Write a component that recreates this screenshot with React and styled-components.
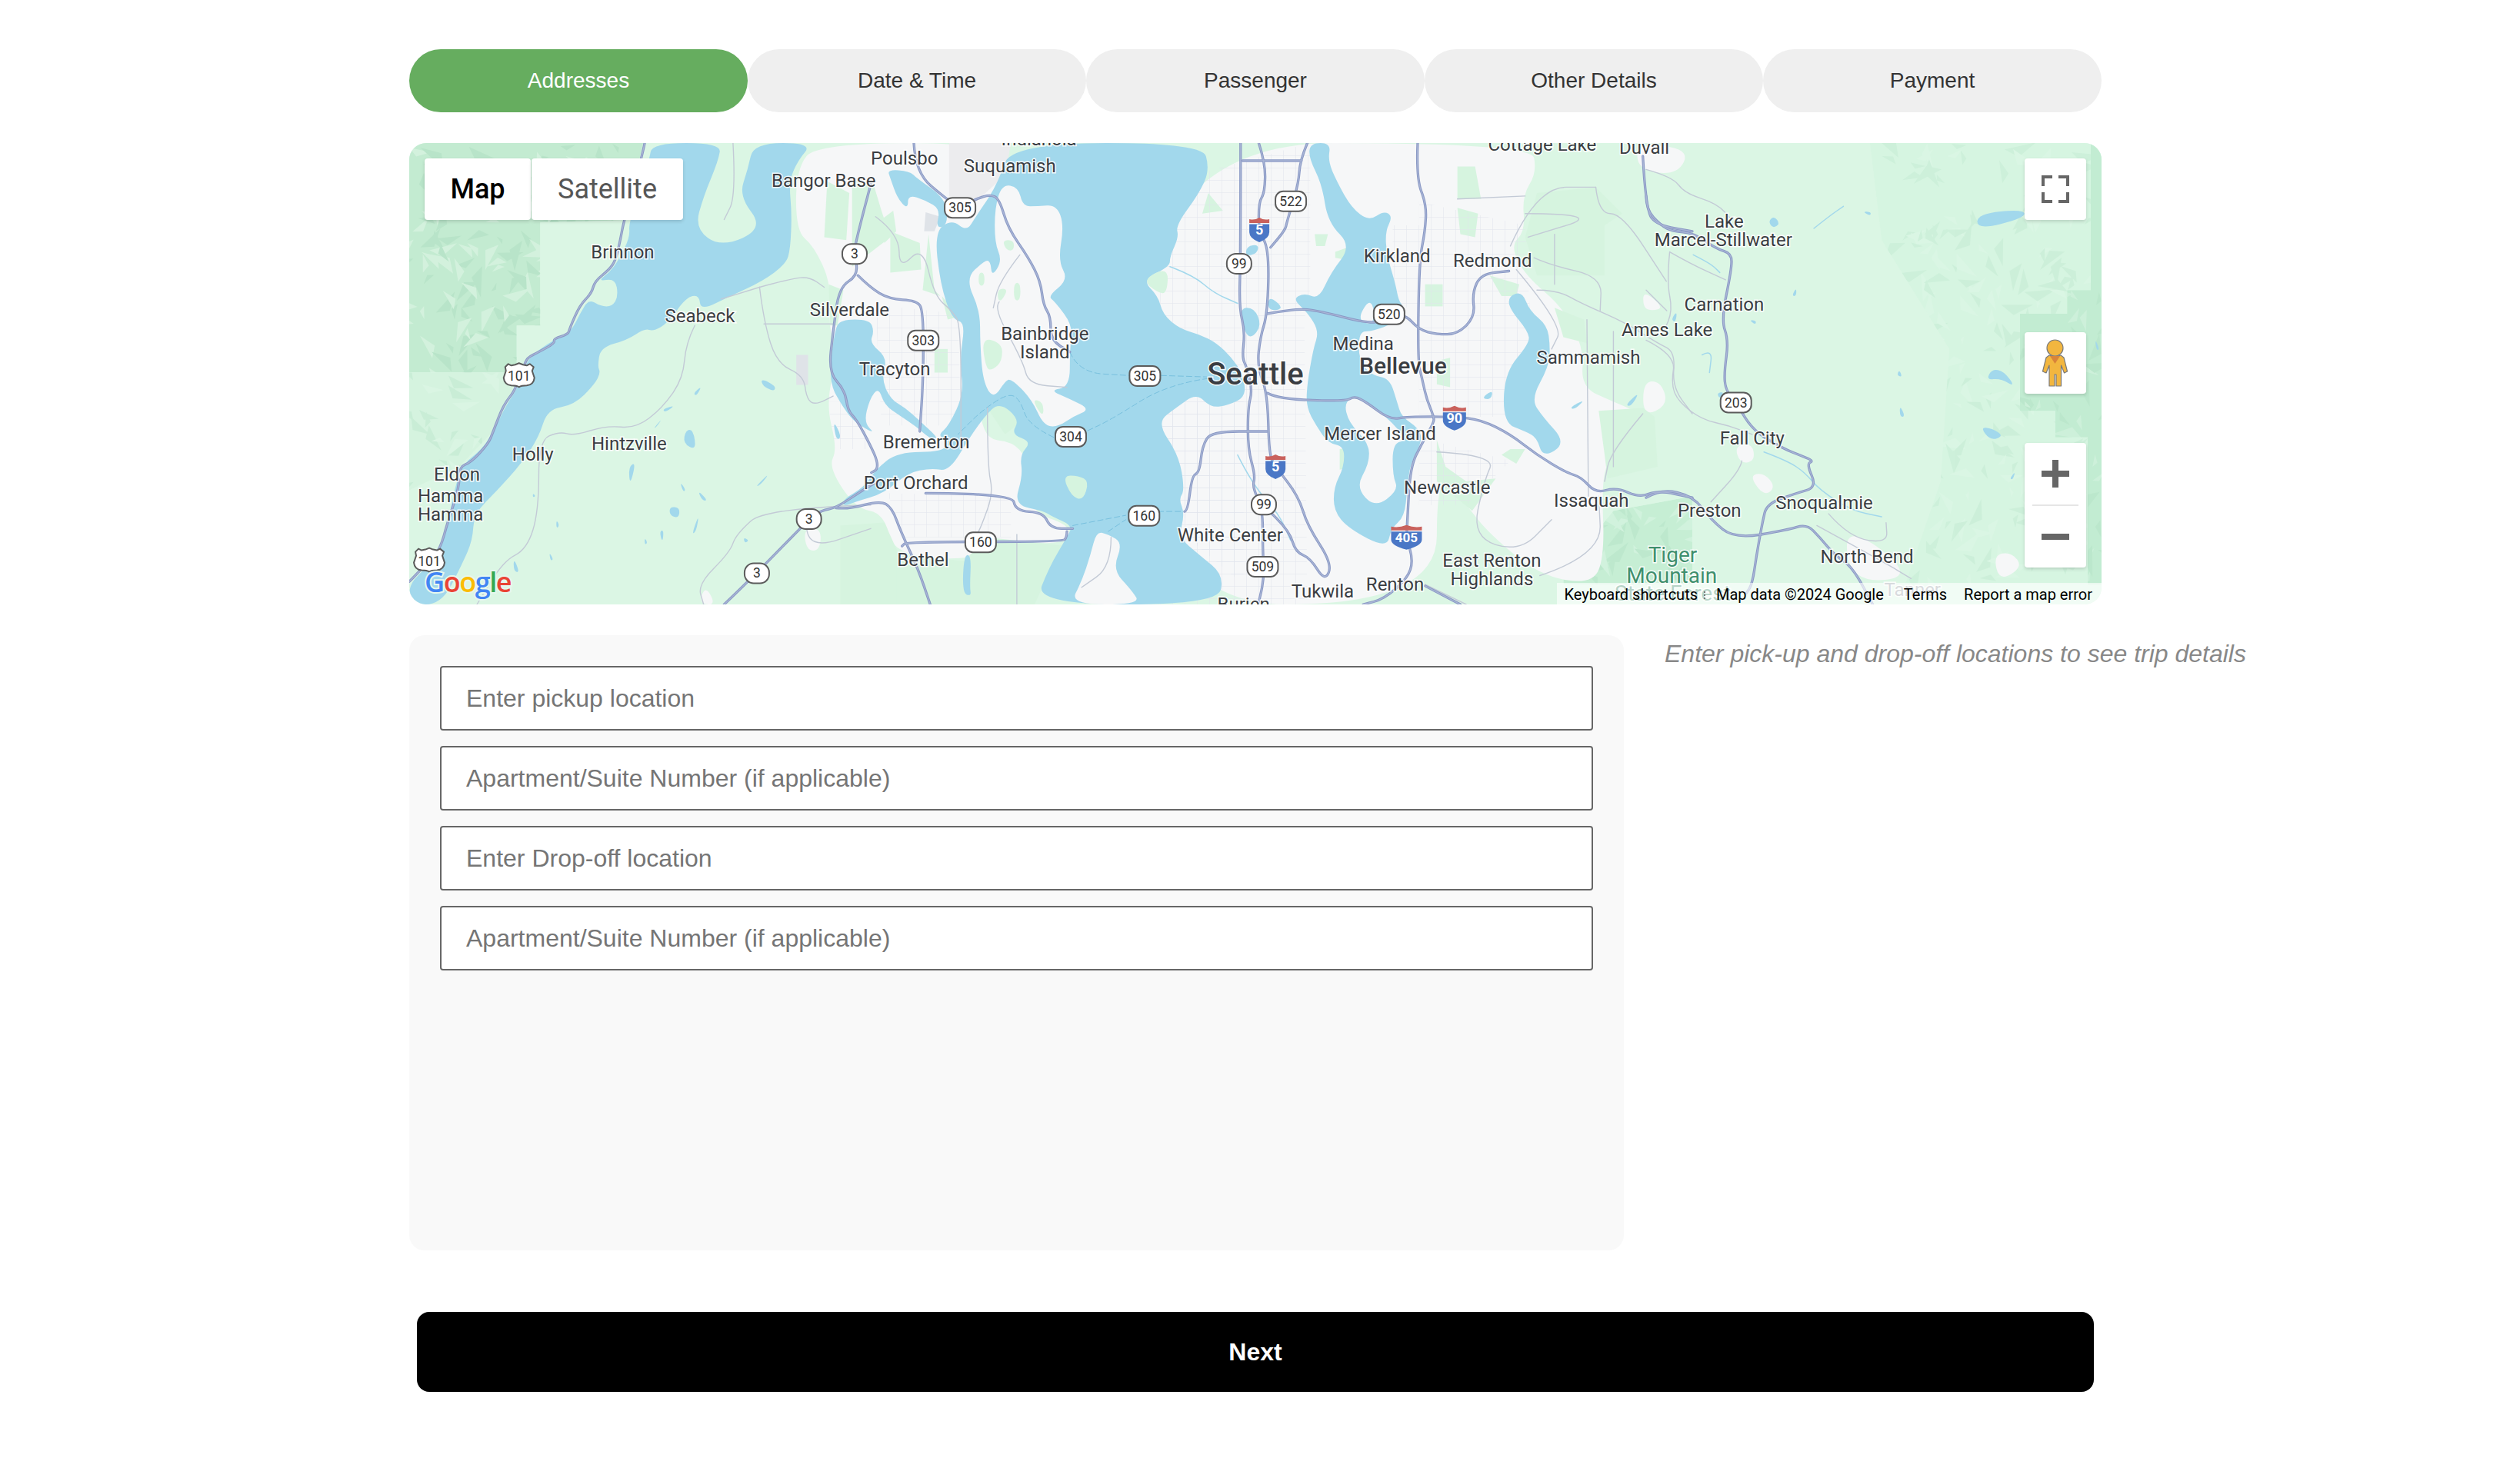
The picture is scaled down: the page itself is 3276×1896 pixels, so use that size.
import React from 'react';
import styled, { createGlobalStyle } from 'styled-components';

const GlobalStyle = createGlobalStyle`
    html, body {
        margin: 0;
        padding: 0;
        background: #fff;
        font-family: "Liberation Sans", Arial, sans-serif;
    }
`;

const Page = styled.div`
    width: 3264px;
    display: flex;
    justify-content: center;
    padding-top: 64px;
    padding-bottom: 86px;
`;

const Content = styled.div`
    width: 2200px;
    display: flex;
    flex-direction: column;
    align-items: center;
`;

const Steps = styled.div`
    width: 100%;
    display: grid;
    grid-template-columns: repeat(5, 1fr);
    margin-bottom: 40px;
`;

const Step = styled.div`
    height: 82px;
    border-radius: 41px;
    display: flex;
    align-items: center;
    justify-content: center;
    font-size: 28px;
    background: ${(p) => (p.$active ? '#66ad5f' : '#efefef')};
    color: ${(p) => (p.$active ? '#fff' : '#333')};
`;

const MapFrame = styled.div`
    position: relative;
    width: 100%;
    height: 600px;
    border-radius: 22px;
    overflow: hidden;
    background: #dbf6e4;
    margin-bottom: 40px;
`;

const MapCanvas = styled.svg`
    display: block;
    width: 2200px;
    height: 600px;
`;

const Fill = styled.path`
    fill: ${(p) => p.$color};
    stroke: none;
`;

const Line = styled.path`
    fill: none;
    stroke: ${(p) => p.$color};
    stroke-width: ${(p) => p.$w}px;
    stroke-linejoin: round;
    stroke-linecap: round;
    stroke-dasharray: ${(p) => p.$dash || 'none'};
`;

const Label = styled.text`
    font-family: Roboto, "Liberation Sans", sans-serif;
    font-size: ${(p) => p.$size || 24}px;
    font-weight: ${(p) => p.$weight || 400};
    fill: ${(p) => p.$color || '#3a3d42'};
    stroke: #fff;
    stroke-width: 3px;
    stroke-opacity: 0.85;
    paint-order: stroke;
    text-anchor: middle;
`;

const ShieldText = styled.text`
    font-family: Roboto, "Liberation Sans", sans-serif;
    font-size: ${(p) => p.$size || 17.5}px;
    font-weight: ${(p) => p.$weight || 400};
    fill: ${(p) => p.$color || '#333'};
    text-anchor: middle;
`;

const LogoText = styled.text`
    font-family: "Open Sans", Roboto, sans-serif;
    font-size: 36px;
    font-weight: 600;
    stroke: #e6f7ee;
    stroke-width: 4px;
    paint-order: stroke;
    letter-spacing: -1.5px;
`;

const MapTypes = styled.div`
    position: absolute;
    top: 20px;
    left: 20px;
    display: flex;
    gap: 1px;
`;

const MapType = styled.button`
    height: 80px;
    width: ${(p) => p.$w}px;
    border: none;
    border-radius: 4px;
    background: #fff;
    box-shadow: 0 2px 4px rgba(0, 0, 0, 0.15);
    font-family: Roboto, "Liberation Sans", sans-serif;
    font-size: 36px;
    font-weight: ${(p) => (p.$active ? 500 : 400)};
    color: ${(p) => (p.$active ? '#000' : '#565656')};
    padding: 0;
`;

const MapButton = styled.div`
    position: absolute;
    right: 20px;
    top: ${(p) => p.$top}px;
    width: 80px;
    height: 80px;
    background: #fff;
    border-radius: 4px;
    box-shadow: 0 2px 4px rgba(0, 0, 0, 0.15);
    display: flex;
    align-items: center;
    justify-content: center;
`;

const ZoomBox = styled.div`
    position: absolute;
    right: 20px;
    top: 390px;
    width: 80px;
    background: #fff;
    border-radius: 4px;
    box-shadow: 0 2px 4px rgba(0, 0, 0, 0.15);
    display: flex;
    flex-direction: column;
    align-items: center;
`;

const ZoomStep = styled.div`
    height: 80px;
    display: flex;
    align-items: center;
    justify-content: center;
`;

const ZoomRule = styled.div`
    width: 60px;
    height: 2px;
    background: #e6e6e6;
`;

const Attribution = styled.div`
    position: absolute;
    right: 0;
    bottom: 0;
    height: 28px;
    box-sizing: border-box;
    padding: 2px 12px 0 10px;
    display: flex;
    align-items: center;
    gap: 26px;
    background: rgba(255, 255, 255, 0.62);
    font-family: Roboto, "Liberation Sans", sans-serif;
    font-size: 20px;
    color: #000;
    white-space: nowrap;
`;

const AttributionItem = styled.span`
    position: relative;
    margin-left: ${(p) => p.$pull || 0}px;

    &[data-dots]::after {
        content: '';
        position: absolute;
        right: -12px;
        top: 8px;
        width: 2px;
        height: 10px;
        border-left: 2px dotted #777;
    }
`;

const Row = styled.div`
    width: 100%;
    display: flex;
    gap: 53px;
    margin-bottom: 80px;
`;

const Panel = styled.div`
    width: 1579px;
    height: 800px;
    flex: none;
    box-sizing: border-box;
    padding: 40px;
    border-radius: 20px;
    background: #f9f9f9;
    display: flex;
    flex-direction: column;
    gap: 20px;
`;

const Field = styled.input`
    height: 84px;
    box-sizing: border-box;
    width: 100%;
    background: #fff;
    border: 2px solid #666;
    border-radius: 4px;
    padding: 0 32px;
    font-family: "Liberation Sans", Arial, sans-serif;
    font-size: 32px;
    outline: none;

    &::placeholder {
        color: #757575;
        opacity: 1;
    }
`;

const Hint = styled.p`
    margin: 6px 0 0;
    font-size: 32px;
    font-style: italic;
    line-height: 37px;
    color: #888;
    white-space: nowrap;
`;

const NextButton = styled.button`
    width: 2180px;
    height: 104px;
    border: none;
    border-radius: 16px;
    background: #000;
    color: #fff;
    font-family: "Liberation Sans", Arial, sans-serif;
    font-size: 32px;
    font-weight: 700;
`;

// zoomed crops were read at 1568px for 600px, every crop has its own x offset
const K = 600 / 1568;
const OFFSET = { A: 0, B: 568, C: 1068, D: 1608 };
const mx = (c, x) => OFFSET[c] + x * K;
const my = (y) => y * K;

const parse = (c, s) =>
    s.trim().split(/\s+/).map((p) => {
        const [x, y] = p.split(',').map(Number);
        return [+mx(c, x).toFixed(1), +my(y).toFixed(1)];
    });

const mid = (a, b) => [((a[0] + b[0]) / 2).toFixed(1), ((a[1] + b[1]) / 2).toFixed(1)];

const closed = (c, s) => {
    const pts = parse(c, s);
    const n = pts.length;
    let d = `M${mid(pts[n - 1], pts[0]).join(',')}`;
    pts.forEach((p, i) => {
        d += ` Q${p[0]},${p[1]} ${mid(p, pts[(i + 1) % n]).join(',')}`;
    });
    return d + ' Z';
};

const open = (c, s) => {
    const pts = parse(c, s);
    let d = `M${pts[0].join(',')}`;
    for (let i = 1; i < pts.length - 1; i++) {
        d += ` Q${pts[i][0]},${pts[i][1]} ${mid(pts[i], pts[i + 1]).join(',')}`;
    }
    return d + ` L${pts[pts.length - 1].join(',')}`;
};

const rawPoly = (c, s) => 'M' + parse(c, s).map((p) => p.join(',')).join(' L') + ' Z';

// low poly relief, seeded so the picture stays the same
const relief = (x0, y0, x1, y1, count, seed) => {
    let s = seed;
    const rnd = () => {
        s = (s * 16807) % 2147483647;
        return s / 2147483647;
    };
    const out = [];
    for (let i = 0; i < count; i++) {
        const x = x0 + rnd() * (x1 - x0);
        const y = y0 + rnd() * (y1 - y0);
        const a = rnd() * 6.28;
        const r = 12 + rnd() * 30;
        const d = `M${x.toFixed(1)},${y.toFixed(1)} L${(x + Math.cos(a) * r).toFixed(1)},${(y + Math.sin(a) * r).toFixed(1)} L${(x + Math.cos(a + 0.7) * r * 0.5).toFixed(1)},${(y + Math.sin(a + 0.7) * r * 0.5).toFixed(1)} Z`;
        out.push({ d, color: rnd() > 0.45 ? '#a9d9bd' : '#eafbf0' });
    }
    return out;
};

const TERRAIN = [
    { id: 'tw1', o: 0.4, d: rawPoly('A', '0,0 795,0 735,262 445,270 445,620 365,620 365,780 0,780'), color: '#c3ebd1', tri: relief(0, 0, 310, 300, 200, 11) },
    { id: 'tw2', o: 0.25, d: rawPoly('A', '0,780 325,780 355,840 285,980 170,1100 0,1180'), color: '#d5f3df', tri: relief(0, 295, 140, 460, 40, 23) },
    { id: 'te1', o: 0.2, d: rawPoly('D', '760,0 1547,0 1547,1500 880,1500 1000,1150 1030,700 800,330'), color: '#d6f5e1', tri: relief(1930, 0, 2200, 580, 240, 37) },
    { id: 'te2', o: 0.28, d: rawPoly('D', '1510,0 1547,0 1547,1500 1500,1500 1500,1000 1390,1000 1390,910 1270,910 1270,580 1430,580 1430,500 1510,500'), color: '#c2ecd2', tri: relief(2090, 190, 2200, 590, 70, 51) },
    { id: 'te3', o: 0.3, d: rawPoly('C', '960,1100 1090,1130 1085,1290 1000,1340 880,1300 800,1230'), color: '#c5edd3', tri: relief(1380, 420, 1490, 520, 30, 73) },
    { id: 'te4', o: 0.3, d: rawPoly('C', '1130,1295 1210,1295 1210,1360 1300,1250 1568,1200 1568,1500 1130,1500'), color: '#c6eed4', tri: relief(1500, 470, 1680, 580, 50, 89) },
];

const URBAN = [
    ['B', '-170,90 -100,0 560,0 560,200 410,1000 620,1020 610,1250 770,1300 740,1370 480,1340 440,1420 160,1400 130,1260 30,1240 -60,1100 -30,1040 -70,880 -20,700 -60,640 -50,480 -110,350 -170,300'],
    ['C', '-320,0 1020,0 1040,100 990,180 1000,300 950,350 1000,450 1130,560 1200,700 1190,830 1300,880 1400,920 1350,1000 1290,1060 1260,1150 1270,1400 1230,1500 1050,1470 880,1330 800,1230 700,1100 700,1568 -320,1568'],
    ['D', '-30,0 150,20 105,110 -30,90'],
    ['D', '-10,500 60,560 20,570 -10,560'],
    ['D', '-10,810 50,810 75,890 -10,930'],
    ['D', '350,1130 400,1120 440,1170 400,1200'],
    ['D', '300,1030 360,1020 370,1080 320,1090'],
    ['D', '670,1320 780,1360 900,1480 700,1490'],
    ['D', '1180,1400 1240,1390 1280,1440 1200,1490'],
    ['A', '990,1540 1010,1510 1040,1568 995,1568'],
    ['A', '1340,1310 1400,1310 1395,1385 1350,1385'],
];

const RESERVED = [
    ['B', '350,0 560,0 540,110 440,200 350,180', '#ececee'],
    ['B', '270,235 320,250 300,300 265,300', '#dfe3e8'],
    ['A', '1315,720 1355,720 1355,822 1315,822', '#dfe3e8'],
];

const PARKS = [
    ['A', '1420,130 1495,170 1485,330 1410,320'],
    ['A', '1425,480 1475,500 1455,620 1430,620'],
    ['B', '20,130 90,130 120,230 150,320 20,420'],
    ['B', '150,300 250,340 255,430 150,440'],
    ['B', '280,310 300,500 320,520 260,500'],
    ['B', '300,700 345,700 345,780 300,780'],
    ['B', '325,520 385,590 345,600'],
    ['B', '120,260 160,230 170,300 130,340'],
    ['B', '460,660 530,680 530,740 500,770 475,770'],
    ['B', '630,870 670,880 670,935'],
    ['B', '480,900 570,880 590,950 540,990'],
    ['B', '450,440 470,440 470,485 450,485'],
    ['B', '570,475 592,475 592,535 570,535'],
    ['B', '515,495 550,495 530,535 515,535'],
    ['B', '530,330 570,330 570,365 545,365'],
    ['B', '570,205 595,205 595,235 575,235'],
    ['B', '-20,1300 130,1290 180,1400 250,1480 280,1568 -20,1568'],
    ['B', '170,1568 170,1400 400,1420 480,1340 750,1370 690,1460 640,1568'],
    ['B', '1230,170 1280,230 1210,240'],
    ['C', '770,80 830,80 850,190 770,190'],
    ['C', '770,220 840,240 830,320 780,310'],
    ['C', '660,480 720,480 720,555 660,555'],
    ['C', '285,310 330,310 320,350 290,350'],
    ['C', '355,370 410,350 380,395 355,390'],
    ['C', '700,740 745,730 745,830 700,820'],
    ['C', '370,1040 405,1035 410,1100 370,1110'],
    ['C', '880,450 980,480 970,520 920,520'],
    ['C', '1040,170 1240,150 1330,240 1270,280 1270,450 1040,450 1000,320'],
    ['C', '1100,560 1200,600 1210,680 1130,660'],
    ['C', '700,1010 730,1100 800,1150 900,1140 820,1250 700,1150'],
    ['C', '950,1040 1000,1040 970,1090 920,1060'],
    ['C', '1250,910 1400,900 1440,930 1450,1100 1280,1140 1270,1060'],
];

const GRID = [
    ['C', '-240,140 270,0 270,500 250,600 260,1568 -240,1568 -240,900 -60,840 -240,640'],
    ['C', '640,200 1000,280 1020,640 930,930 640,930'],
    ['C', '640,1000 950,1080 800,1230 640,1230'],
    ['C', '550,280 640,280 640,560 550,560'],
    ['B', '100,550 380,580 390,960 120,960'],
    ['B', '140,1190 560,1200 560,1340 200,1340'],
    ['B', '-60,880 40,880 90,1040 -40,1040'],
    ['B', '1060,900 1350,860 1350,1500 1170,1350'],
];

const WATER = [
    ['A', '825,0 815,60 745,270 750,320 710,400 680,440 640,470 700,460 710,520 690,555 650,555 610,530 580,580 550,640 490,670 400,730 370,830 330,890 290,970 250,1040 170,1100 130,1300 100,1390 50,1450 0,1500 0,1568 110,1568 180,1430 215,1350 220,1260 300,1180 380,1090 440,1000 470,905 560,890 630,820 650,780 640,760 650,695 740,670 800,630 830,640 880,610 940,525 985,515 990,570 1090,520 1200,470 1280,410 1295,360 1300,240 1290,130 1320,60 1370,0 1170,0 1150,90 1120,180 1205,290 1060,355 970,290 1000,180 1050,60 1060,0'],
    ['B', '560,0 1210,0 1235,90 1200,170 1120,280 1130,320 1100,385 1100,420 1005,465 1060,520 1075,580 1130,630 1200,650 1260,680 1310,730 1345,780 1360,860 1300,890 1240,900 1190,850 1120,900 1055,950 1130,1060 1150,1180 1130,1210 1150,1260 1130,1340 1200,1400 1285,1470 1260,1568 640,1568 690,1440 750,1340 770,1300 700,1270 670,1250 570,1230 600,1130 590,1060 630,1015 560,990 590,940 520,880 470,930 420,1000 350,1115 290,1105 210,1120 130,1190 30,1220 -10,1235 -10,1210 60,1170 100,1110 175,1050 330,1050 350,1010 310,995 350,960 400,850 385,740 405,610 360,600 320,480 300,300 360,260 410,300 440,250 515,140'],
    ['B', '140,90 215,95 240,120 340,190 345,280 305,290 320,225 270,195 210,175 210,225 175,190 150,120'],
    ['B', '-40,640 -20,600 80,600 95,640 80,680 140,730 120,800 150,870 200,900 240,935 295,985 310,1005 285,1005 240,965 180,925 130,890 110,830 80,870 60,950 100,990 30,950 -10,900 -60,810'],
    ['B', '580,290 610,250 640,220 640,270 600,290'],
    ['C', '270,0 340,0 330,60 360,130 410,220 470,265 520,230 550,250 525,300 530,380 560,480 570,535 590,560 560,610 480,640 435,640 435,740 480,790 540,800 565,880 580,930 640,970 650,1015 610,1090 600,1170 590,1270 545,1310 530,1378 400,1310 350,1250 350,1170 385,1100 385,1030 330,1020 290,960 258,900 258,830 280,700 300,640 260,575 210,530 250,510 300,530 340,440 410,350 330,270 310,140 265,50'],
    ['C', '945,520 990,505 1015,570 1075,620 1085,690 1080,760 1020,870 1060,930 1140,1020 1060,1070 1040,1000 1000,980 925,950 930,780 1015,680 1010,640 945,560'],
    ['C', '30,560 80,560 105,620 70,665 45,640'],
    ['C', '130,520 175,555 160,570 125,565'],
    ['C', '55,350 95,345 90,375 50,385'],
];

const ISLANDS = [
    ['B', '530,140 585,150 600,215 650,215 715,210 740,280 720,400 755,465 685,520 710,540 770,620 760,700 760,830 690,840 760,870 830,905 770,930 720,965 670,960 630,870 560,800 540,810 500,870 465,810 455,680 455,570 405,460 470,400 490,400 495,455 530,400 505,340 505,220'],
    ['B', '850,1320 890,1330 940,1360 905,1450 970,1520 1000,1568 760,1568 800,1490 830,1400'],
    ['C', '385,880 430,860 530,930 600,1010 550,1020 550,1130 570,1180 490,1240 425,1170 470,1090 470,1020 400,950'],
    ['C', '430,600 470,530 490,570 480,620'],
];

const ISLAND_PARKS = [
    ['B', '735,1130 790,1130 825,1150 805,1215 765,1200'],
    ['B', '1005,465 1095,420 1090,510 1060,510'],
    ['B', '460,660 530,680 530,740 500,770 475,770'],
    ['B', '630,870 670,880 670,935'],
    ['B', '450,440 470,440 470,485 450,485'],
    ['B', '570,475 592,475 592,535 570,535'],
    ['B', '515,495 550,495 530,535 515,535'],
    ['B', '530,330 570,330 570,365 545,365'],
];

const LAKES = [
    ['A', '940,975 965,975 975,1045 930,1020'], ['A', '745,1100 770,1085 750,1165'], ['A', '885,1235 920,1240 915,1275 885,1265'],
    ['A', '960,1330 985,1260 975,1320'], ['A', '980,1180 1015,1215 995,1215'], ['A', '1195,800 1245,825 1240,845 1200,825'],
    ['A', '965,850 995,825 975,860'], ['A', '1175,1170 1225,1120 1195,1160'], ['A', '850,1320 865,1315 860,1360'],
    ['A', '475,1390 490,1415 480,1420'], ['A', '355,1410 375,1460 355,1455'], ['A', '500,1280 510,1300 500,1310'],
    ['A', '800,1340 810,1360 800,1365'], ['A', '920,1150 940,1180 930,1185'], ['A', '830,970 860,935 840,965'],
    ['A', '860,905 905,890 870,915'], ['A', '1135,1340 1155,1350 1140,1360'], ['A', '420,1190 430,1200 420,1205'],
    ['A', '1440,940 1470,1000 1450,1010'], ['B', '400,1400 425,1400 420,1510 425,1540 395,1530'],
    ['D', '415,265 435,248 455,275 430,290'], ['D', '1125,240 1285,225 1285,255 1125,295'],
    ['D', '1155,805 1175,768 1215,775 1255,830 1205,800'], ['D', '1135,965 1175,970 1215,995 1170,1012'],
    ['D', '495,520 510,490 510,520'], ['D', '860,770 870,795 852,790'], ['D', '862,890 880,930 862,930'],
    ['D', '735,232 765,235 760,248'], ['D', '1235,1140 1255,1115 1245,1145'], ['D', '350,600 375,605 370,618'],
    ['D', '1525,665 1540,700 1530,705'], ['D', '85,600 105,570 100,610'], ['D', '240,850 265,845 250,870'],
    ['C', '860,860 890,840 885,870 860,870'], ['C', '1150,900 1205,870 1170,905'], ['C', '1340,890 1390,845 1360,895'],
];

const STREAMS = [
    ['B', '1330,1060 1380,1160 1470,1260 1510,1350'],
    ['B', '1100,420 1180,450 1250,510 1330,545'],
    ['D', '190,720 225,700 215,780'],
    ['D', '400,1050 480,1080 540,1120 590,1180 700,1250 800,1270'],
    ['D', '570,290 620,250 670,215'],
    ['D', '160,380 220,410 250,440'],
];

const FERRIES = [
    ['B', '760,710 790,780 960,790'],
    ['B', '1070,790 1230,795'],
    ['B', '1230,800 1090,820 900,940 815,980'],
    ['B', '705,1000 620,960 590,870 550,850 460,910 380,990'],
    ['B', '770,1300 950,1265'],
    ['B', '1060,1252 1150,1252'],
    ['B', '890,1320 950,1280'],
];

const STREETS = [
    ['A', '1190,490 1060,530'], ['A', '1190,490 1300,460 1360,455 1410,490'],
    ['A', '970,620 940,680 930,800 860,900 770,970 670,960 560,995 510,980 440,1010 440,1250 400,1380 320,1420 230,1568'],
    ['A', '1190,490 1205,610 1250,750 1340,790 1350,870 1380,890 1440,860'], ['A', '1205,615 1440,615'],
    ['A', '1100,0 1110,180 1070,260'], ['A', '1568,1230 1210,1240 1110,1330 1090,1390 980,1500 1000,1568'],
    ['A', '1350,1300 1350,1385 1568,1310'],
    ['B', '100,250 180,310 180,430 260,350 300,520 360,570 390,620 390,1000'],
    ['B', '480,900 480,1100 500,1190 460,1300 440,1340'], ['B', '520,540 500,560 600,740 620,820 750,830'],
    ['B', '590,380 520,470 500,560'], ['B', '580,1330 580,1568'], ['B', '900,1340 900,1440 800,1510'],
    ['C', '1000,240 1270,240 1010,320'], ['C', '1100,310 1100,480'], ['C', '1240,150 1250,240 1330,240 1480,470'],
    ['C', '1030,390 1085,415 1260,455 1255,570'], ['C', '1040,500 1110,500 1190,545 1340,610 1450,680 1510,710 1500,830 1568,920'],
    ['C', '950,350 1040,150 1240,150'], ['C', '770,190 1000,180'], ['C', '970,430 1130,620 1090,700'],
    ['C', '1300,640 1300,1100'], ['C', '1210,600 1215,1200'], ['C', '700,1050 900,1060 860,1150 820,1340 980,1390 1090,1280'],
    ['C', '1050,1470 1260,1400 1250,1200'], ['C', '660,1500 800,1568'], ['C', '1400,920 1290,1050 1270,1150'],
    ['D', '0,90 90,115 130,170 240,205 290,260'], ['D', '80,370 70,470 90,570 60,640'], ['D', '80,370 150,410 270,465'],
    ['D', '0,500 70,570'], ['D', '0,670 100,720 85,820 110,880 190,940 280,960 360,990'],
    ['D', '325,1080 320,1110 220,1220'], ['D', '580,1300 800,1420 900,1480'], ['D', '620,1260 690,1340 820,1360 815,1290'],
];

const HIGHWAYS = [
    ['A', '800,0 790,50 730,260 715,340 700,400 680,430 630,470 620,510 580,550 545,630 540,650 490,665 495,680 440,710 400,730 390,760 373,790 360,840 320,890 285,980 270,1020 210,1085 170,1100 170,1170 130,1290 105,1380 68,1418 30,1460 0,1490'],
    ['A', '1568,140 1515,340 1513,377 1525,450 1460,490 1440,640 1425,780 1480,840 1490,910 1520,940 1568,1030 1590,1080 1590,1110 1570,1120'],
    ['B', '40,450 80,490 145,530 240,535 262,570 262,800 250,980'],
    ['A', '1070,1568 1181,1462 1358,1278 1400,1248 1450,1240 1540,1180 1590,1150'],
    ['A', '1450,1240 1490,1245 1600,1215 1640,1240 1670,1320 1730,1450 1770,1568'],
    ['B', '230,0 235,100 340,190 387,220 440,190 490,175 520,190 550,290 620,390 660,470 670,550 695,590 695,670 760,710'],
    ['B', '270,1190 565,1190 575,1250 670,1255 695,1310 770,1310'],
    ['B', '750,1320 750,1340 735,1355 205,1355 190,1370'],
    ['B', '1150,1252 1160,1250 1175,1130 1200,1120 1210,1030 1240,980 1430,980'],
    ['C', '95,0 118,70 115,170 95,200 95,300 130,360 125,580 100,660 90,760 125,850 130,1060 152,1100 230,1200 260,1300 345,1430 320,1490 270,1410 220,1390 200,1320 110,1230'],
    ['B', '1340,0 1340,380 1335,560 1355,640 1345,730 1360,760 1380,840 1365,900 1365,1040 1390,1130 1380,1170 1415,1240 1415,1380 1420,1480 1400,1568'],
    ['C', '40,60 240,60'],
    ['C', '260,0 235,60 230,140 190,270 185,295 135,355'],
    ['C', '125,580 220,562 300,570 470,615 538,600 590,580 640,635 700,650 770,650 830,590 820,510 850,445 945,435'],
    ['C', '635,0 630,120 665,210 660,300 640,400 635,740 650,800 665,870 690,930 690,950 650,1020 610,1100 600,1280 597,1340 620,1420 600,1480 520,1550 450,1568'],
    ['C', '125,850 160,870 390,878 420,860 460,880 540,940 600,930 760,930 850,940 950,990 1040,1060 1140,1120 1190,1135 1240,1190 1310,1170 1390,1205 1450,1180 1568,1205'],
    ['C', '1400,45 1410,230 1450,280 1568,300'],
    ['D', '0,1205 50,1175 160,1200 220,1280 300,1345 480,1315 545,1295 590,1340 640,1400 700,1440 770,1568'],
    ['D', '0,180 0,225 50,280 90,300 160,305 240,360 290,375 290,430 255,600 280,670 265,780 270,840 305,882 365,980 470,1040 520,1060 570,1080 545,1090 580,1170 510,1190 410,1225 395,1290 375,1400 360,1500 340,1530'],
    ['C', '660,1505 780,1568'],
];

const PLAIN = [
    ['A', 'Brinnon', 725, 393], ['A', 'Seabeck', 988, 610], ['A', 'Bangor Base', 1408, 150], ['A', 'Silverdale', 1496, 588],
    ['A', 'Hintzville', 747, 1043], ['A', 'Holly', 420, 1078], ['A', 'Eldon', 162, 1148], ['A', 'Hamma', 140, 1220], ['A', 'Hamma', 140, 1283],
    ['B', 'Poulsbo', 198, 72], ['B', 'Suquamish', 556, 100], ['B', 'Indianola', 655, 8], ['B', 'Bainbridge', 675, 670], ['B', 'Island', 675, 733],
    ['B', 'Tracyton', 165, 790], ['B', 'Bremerton', 272, 1038], ['B', 'Port Orchard', 237, 1176], ['B', 'Bethel', 261, 1437],
    ['B', 'White Center', 1305, 1355], ['B', 'Burien', 1350, 1588],
    ['C', 'Kirkland', 565, 405], ['C', 'Redmond', 889, 422], ['C', 'Medina', 450, 702], ['C', 'Mercer Island', 507, 1008],
    ['C', 'Newcastle', 735, 1192], ['C', 'Issaquah', 1225, 1237], ['C', 'Sammamish', 1215, 750], ['C', 'Ames Lake', 1482, 655],
    ['C', 'East Renton', 887, 1440], ['C', 'Highlands', 887, 1503], ['C', 'Renton', 558, 1520], ['C', 'Tukwila', 312, 1545],
    ['C', 'Cottage Lake', 1058, 25], ['C', 'Duvall', 1405, 37],
    ['D', 'Lake', 265, 288], ['D', 'Marcel-Stillwater', 262, 350], ['D', 'Carnation', 265, 570], ['D', 'Fall City', 360, 1025],
    ['D', 'Preston', 215, 1270], ['D', 'Snoqualmie', 605, 1243], ['D', 'North Bend', 750, 1427],
];

const ROUND = [
    ['A', '3', 1513, 377], ['A', '3', 1358, 1278], ['A', '3', 1181, 1462],
    ['B', '305', 387, 220], ['B', '303', 262, 671], ['B', '305', 1015, 792], ['B', '304', 763, 998],
    ['B', '160', 1012, 1267], ['B', '160', 457, 1357], ['B', '99', 1335, 410], ['B', '99', 1419, 1229], ['B', '509', 1415, 1440],
    ['C', '522', 204, 198], ['C', '520', 538, 582], ['D', '203', 305, 882],
];

const INTERSTATE = [
    ['C', '5', 97, 295, 13], ['C', '5', 152, 1100, 13], ['C', '90', 760, 935, 15], ['C', '405', 597, 1340, 20],
];

const RoundShield = ({ c, n, x, y }) => {
    const w = n.length === 3 ? 40 : 32;
    return (
        <g transform={`translate(${mx(c, x)},${my(y)})`}>
            <rect x={-w / 2} y={-13} width={w} height={26} rx={n.length === 3 ? 10 : 12} fill="#fff" stroke="#5b5b5b" strokeWidth="2" />
            <ShieldText y={6}>{n}</ShieldText>
        </g>
    );
};

const UsShield = ({ c, x, y }) => (
    <g transform={`translate(${mx(c, x)},${my(y)})`}>
        <path d="M-18,-11 L-14,-15 L-10,-13 L-5,-14 L0,-16 L5,-14 L10,-13 L14,-15 L19,-11 L17,-6 L20,3 Q19,12 10,13 Q3,13 0,15 Q-3,13 -10,13 Q-19,12 -20,3 L-17,-6 Z" fill="#fff" stroke="#5b5b5b" strokeWidth="2" strokeLinejoin="round" />
        <ShieldText y={7}>101</ShieldText>
    </g>
);

const InterstateShield = ({ c, n, x, y, hw }) => (
    <g transform={`translate(${mx(c, x)},${my(y)})`}>
        <path d={`M${-hw},-9 L${-hw},-14 Q${-hw / 2},-12 0,-16 Q${hw / 2},-12 ${hw},-14 L${hw},-9 Z`} fill="#c9615c" />
        <path d={`M${-hw},-7.5 H${hw} V3 Q${hw},11 0,16 Q${-hw},11 ${-hw},3 Z`} fill="#4a77c6" />
        <ShieldText y={6} $size={n.length === 3 ? 17 : 18} $weight={700} $color="#fff">{n}</ShieldText>
    </g>
);

const StreetMap = () => (
    <MapCanvas viewBox="0 0 2200 600">
        <defs>
            <pattern id="streets" width="16" height="16" patternUnits="userSpaceOnUse">
                <path d="M0,0 H16 M0,0 V16" fill="none" stroke="#e0e3eb" strokeWidth="1" />
            </pattern>
            {TERRAIN.map((t) => (
                <clipPath id={t.id} key={t.id}>
                    <path d={t.d} />
                </clipPath>
            ))}
        </defs>
        {TERRAIN.map((t) => (
            <g key={t.id} clipPath={`url(#${t.id})`}>
                <Fill d={t.d} $color={t.color} />
                <g opacity={t.o}>
                    {t.tri.map((p, i) => (
                        <Fill key={i} d={p.d} $color={p.color} />
                    ))}
                </g>
            </g>
        ))}
        {URBAN.map(([c, s], i) => <Fill key={i} d={closed(c, s)} $color="#f6f7f8" />)}
        {RESERVED.map(([c, s, col], i) => <Fill key={i} d={rawPoly(c, s)} $color={col} />)}
        {PARKS.map(([c, s], i) => <Fill key={i} d={rawPoly(c, s)} $color="#d6f4df" />)}
        {GRID.map(([c, s], i) => <Fill key={i} d={rawPoly(c, s)} $color="url(#streets)" />)}
        {WATER.map(([c, s], i) => <Fill key={i} d={closed(c, s)} $color="#a2d8ec" />)}
        {ISLANDS.map(([c, s], i) => <Fill key={i} d={closed(c, s)} $color="#f6f7f8" />)}
        {ISLAND_PARKS.map(([c, s], i) => <Fill key={i} d={closed(c, s)} $color="#d6f4df" />)}
        {LAKES.map(([c, s], i) => <Fill key={i} d={closed(c, s)} $color="#a2d8ec" />)}
        {STREAMS.map(([c, s], i) => <Line key={i} d={open(c, s)} $color="#a2d8ec" $w={1.5} />)}
        {FERRIES.map(([c, s], i) => <Line key={i} d={open(c, s)} $color="#78c0de" $w={1} $dash="7 4" />)}
        {STREETS.map(([c, s], i) => <Line key={i} d={open(c, s)} $color="#c3cad6" $w={1.4} />)}
        {HIGHWAYS.map(([c, s], i) => <Line key={i} d={open(c, s)} $color="#8a99c5" $w={3.3} />)}
        {HIGHWAYS.map(([c, s], i) => <Line key={i} d={open(c, s)} $color="#a9b5d5" $w={1.3} />)}
        {ROUND.map(([c, n, x, y], i) => <RoundShield key={i} c={c} n={n} x={x} y={y} />)}
        <UsShield c="A" x={373} y={790} />
        <UsShield c="A" x={68} y={1418} />
        {INTERSTATE.map(([c, n, x, y, hw], i) => <InterstateShield key={i} c={c} n={n} x={x} y={y} hw={hw} />)}
        {PLAIN.map(([c, t, x, y], i) => <Label key={i} x={mx(c, x)} y={my(y)}>{t}</Label>)}
        <Label x={mx('B', 1390)} y={my(820)} $size={40} $weight={500}>Seattle</Label>
        <Label x={mx('C', 585)} y={my(785)} $size={30} $weight={500}>Bellevue</Label>
        <Label x={mx('D', 90)} y={my(1423)} $size={28} $color="#3f8f6d">Tiger</Label>
        <Label x={mx('D', 87)} y={my(1496)} $size={28} $color="#3f8f6d">Mountain</Label>
        <Label x={mx('D', 90)} y={my(1556)} $size={28} $color="#3f8f6d">State Forest</Label>
        <Label x={mx('D', 905)} y={my(1540)} $size={24} $color="#9aa0a6">Tanner</Label>
        <LogoText x={20} y={584} textLength="112" lengthAdjust="spacingAndGlyphs">
            <tspan fill="#4285f4">G</tspan>
            <tspan fill="#ea4335">o</tspan>
            <tspan fill="#fbbc05">o</tspan>
            <tspan fill="#4285f4">g</tspan>
            <tspan fill="#34a853">l</tspan>
            <tspan fill="#ea4335">e</tspan>
        </LogoText>
    </MapCanvas>
);

const FullscreenIcon = () => (
    <svg width="36" height="36" viewBox="0 0 36 36">
        <path d="M2,14 V2 H14 M22,2 H34 V14 M34,22 V34 H22 M14,34 H2 V22" fill="none" stroke="#666" strokeWidth="4" />
    </svg>
);

const Pegman = () => (
    <svg width="80" height="80" viewBox="0 0 80 80">
        <circle cx="39.5" cy="20.5" r="10.5" fill="#f2b63f" stroke="#7a7a7a" strokeWidth="1.2" />
        <path d="M32,30 Q40,33 47,30 L51,33 L55.5,51 L51.5,53 L47.5,43 L47.5,70 L41,70 L41,55 L39,55 L39,70 L32,70 L32,43 L28,53 L23.5,51 L28,33 Z" fill="#f2b63f" stroke="#7a7a7a" strokeWidth="1.2" strokeLinejoin="round" />
        <path d="M33,31 L46,31 L39.5,41 Z" fill="#d9843a" />
    </svg>
);

const PlusIcon = () => (
    <svg width="36" height="36" viewBox="0 0 36 36">
        <path d="M0,14 H14 V0 H22 V14 H36 V22 H22 V36 H14 V22 H0 Z" fill="#666" />
    </svg>
);

const MinusIcon = () => (
    <svg width="36" height="8" viewBox="0 0 36 8">
        <rect width="36" height="8" fill="#666" />
    </svg>
);

const STEPS = ['Addresses', 'Date & Time', 'Passenger', 'Other Details', 'Payment'];

const FIELDS = [
    'Enter pickup location',
    'Apartment/Suite Number (if applicable)',
    'Enter Drop-off location',
    'Apartment/Suite Number (if applicable)',
];

const App = () => (
    <>
        <GlobalStyle />
        <Page>
            <Content>
                <Steps>
                    {STEPS.map((s, i) => (
                        <Step key={s} $active={i === 0}>{s}</Step>
                    ))}
                </Steps>
                <MapFrame>
                    <StreetMap />
                    <MapTypes>
                        <MapType $active $w={138}>Map</MapType>
                        <MapType $w={197}>Satellite</MapType>
                    </MapTypes>
                    <MapButton $top={20}><FullscreenIcon /></MapButton>
                    <MapButton $top={246}><Pegman /></MapButton>
                    <ZoomBox>
                        <ZoomStep><PlusIcon /></ZoomStep>
                        <ZoomRule />
                        <ZoomStep><MinusIcon /></ZoomStep>
                    </ZoomBox>
                    <Attribution>
                        <AttributionItem data-dots>Keyboard shortcuts</AttributionItem>
                        <AttributionItem $pull={-2}>Map data ©2024 Google</AttributionItem>
                        <AttributionItem>Terms</AttributionItem>
                        <AttributionItem $pull={-4}>Report a map error</AttributionItem>
                    </Attribution>
                </MapFrame>
                <Row>
                    <Panel>
                        {FIELDS.map((f, i) => (
                            <Field key={i} placeholder={f} readOnly />
                        ))}
                    </Panel>
                    <Hint>Enter pick-up and drop-off locations to see trip details</Hint>
                </Row>
                <NextButton>Next</NextButton>
            </Content>
        </Page>
    </>
);

export default App;
